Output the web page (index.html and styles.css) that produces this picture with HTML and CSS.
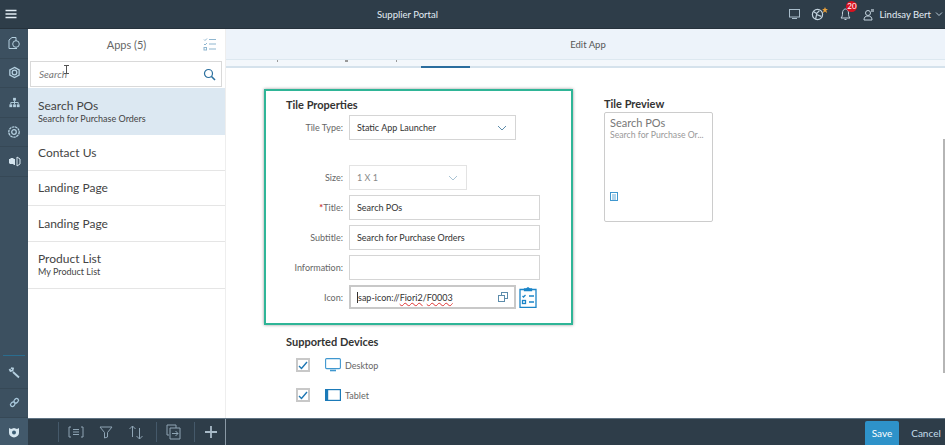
FILE: index.html
```html
<!DOCTYPE html>
<html lang="en">
<head>
  <meta charset="UTF-8">
  <meta name="viewport" content="width=device-width, initial-scale=1.0">
  <title>Supplier Portal</title>
  <link rel="stylesheet" href="styles.css">
</head>
<body>
  <header class="topbar">
    <svg class="menu-icon" width="14" height="12" viewBox="0 0 14 12"><path d="M1.500 2.500h11M1.500 6h11M1.500 9.500h11" stroke="#e4eef5" stroke-width="1.500"/></svg>
    <span class="topbar-title">Supplier Portal</span>
    <div class="topbar-right">
      <svg width="13" height="12" viewBox="0 0 13 12" fill="none" stroke="#a9bdcb"><rect x="1.500" y="1.500" width="10" height="7.500"/><path d="M4 10.500h5" /></svg>
      <span class="globe">
        <svg width="13" height="13" viewBox="0 0 14 14" fill="none" stroke="#c3d3de" stroke-width="1.300"><circle cx="7" cy="7" r="5.500"/><path d="M3 4l3 2 3-3M5 12l1-5 5 2" /></svg>
        <svg class="globe-star" width="6" height="6" viewBox="0 0 6 6"><path d="M3 0l.9 2H6L4.300 3.300 5 6 3 4.500 1 6l.7-2.700L0 2h2.100z" fill="#eba13b"/></svg>
      </span>
      <span class="bell">
        <svg width="11" height="14" viewBox="0 0 11 14" fill="none" stroke="#c3d3de"><path d="M1 11h9C8.500 9.500 8.500 8 8.500 6S7.500 2 5.500 2 2.500 4 2.500 6s0 3.500-1.500 5zM4.500 12.500h2"/></svg>
        <span class="badge">20</span>
      </span>
      <span class="user">
        <svg width="12" height="13" viewBox="0 0 12 13" fill="none" stroke="#c3d3de"><circle cx="5" cy="5" r="2.500"/><path d="M1 12c0-3 1.500-4 4-4s4 1 4 4z"/><rect x="8" y="1" width="3" height="3" fill="#8c9aa5" stroke="none"/></svg>
        <span class="user-name">Lindsay Bert</span>
        <svg width="8" height="6" viewBox="0 0 8 6" fill="none" stroke="#b7c9d6"><path d="M1 1.500l3 3 3-3"/></svg>
      </span>
    </div>
  </header>

  <div class="workspace">
    <nav class="rail">
      <a class="rail-btn"><svg width="14" height="14" viewBox="0 0 14 14" fill="none" stroke="#b5d0e0"><path d="M5 1.500L2 4v8.500h8M5 1.500h4V5"/><circle cx="9" cy="8" r="3.300"/></svg></a>
      <a class="rail-btn"><svg width="13" height="13" viewBox="0 0 14 14" fill="none" stroke="#b5d0e0" stroke-width="1.400"><path d="M7 1.500l5 2.800v5.400l-5 2.800-5-2.800V4.300z"/><circle cx="7" cy="7" r="2.500"/></svg></a>
      <a class="rail-btn"><svg width="13" height="13" viewBox="0 0 14 14" fill="#b5d0e0"><rect x="5.500" y="2" width="3" height="3"/><rect x="1.500" y="9" width="3" height="3"/><rect x="5.500" y="9" width="3" height="3"/><rect x="9.500" y="9" width="3" height="3"/><path d="M3 9V7h8v2M7 5v4" fill="none" stroke="#b5d0e0"/></svg></a>
      <a class="rail-btn"><svg width="14" height="14" viewBox="0 0 14 14" fill="none" stroke="#b5d0e0" stroke-width="1.300"><circle cx="7" cy="7" r="5.200" stroke-dasharray="2.500 .6"/><circle cx="7" cy="7" r="2.300"/></svg></a>
      <a class="rail-btn"><svg width="13" height="13" viewBox="0 0 13 13" fill="#d4e4ee"><path d="M1 4h1l1-1h2l1 1h1v6H6L5 9H2L1 8z"/><path d="M9 2l3 2v5l-3 2z" fill="none" stroke="#d4e4ee"/></svg></a>
      <div class="rail-spacer"></div>
      <div class="rail-rule"></div>
      <a class="rail-btn"><svg width="12" height="12" viewBox="0 0 12 12" fill="none" stroke="#b5d0e0" stroke-width="1.800"><path d="M11 10.500L5 5M1.500 2l1 2 2-.5.500-2-2-.5"/></svg></a>
      <a class="rail-btn"><svg width="13" height="13" viewBox="0 0 12 12" fill="none" stroke="#a9c8dc" stroke-width="1.200"><rect x="1.500" y="4.300" width="4.500" height="3.400" rx="1.700" transform="rotate(-45 6 6)"/><rect x="6" y="4.300" width="4.500" height="3.400" rx="1.700" transform="rotate(-45 6 6)"/></svg></a>
      <a class="rail-btn rail-btn-last"><svg width="12" height="12" viewBox="0 0 12 12"><path d="M1 2l2 1 3-1 3 1 2-1v5c0 2.500-2.500 4-5 4.500C3.500 11 1 9.500 1 7z" fill="#d6e6ef"/><circle cx="6" cy="6.500" r="2" fill="#3b5d74"/></svg></a>
    </nav>

    <div class="stage">
      <div class="panes">
        <aside class="apps">
          <div class="apps-head">
            <span class="apps-title">Apps (5)</span>
            <svg class="apps-select" width="14" height="14" viewBox="0 0 14 14" fill="none" stroke="#8fb6cf"><path d="M1 2.500l1 1 2-2M1 7l1 1 2-2M6 2.500h7M6 7h7M6 12h7"/><rect x="1" y="10.500" width="2.500" height="2.500"/></svg>
          </div>
          <div class="apps-search">
            <span class="apps-placeholder">Search</span>
            <svg class="text-cursor" width="5" height="9" viewBox="0 0 5 9" fill="none" stroke="#555"><path d="M0 .5h5M0 8.500h5M2.500 .5v8"/></svg>
            <svg width="13" height="13" viewBox="0 0 13 13" fill="none" stroke="#2a6f9e" stroke-width="1.200"><circle cx="5.500" cy="5.500" r="4"/><path d="M8.500 8.500L12 12" stroke-width="1.600"/></svg>
          </div>
          <ul class="app-list">
            <li class="app-item app-item-two selected"><span class="app-name">Search POs</span><span class="app-sub">Search for Purchase Orders</span></li>
            <li class="app-item"><span class="app-name">Contact Us</span></li>
            <li class="app-item"><span class="app-name">Landing Page</span></li>
            <li class="app-item"><span class="app-name">Landing Page</span></li>
            <li class="app-item app-item-two"><span class="app-name">Product List</span><span class="app-sub">My Product List</span></li>
          </ul>
        </aside>

        <main class="editor">
          <div class="editor-head">Edit App</div>
          <div class="tabstrip">
            <span class="tab-mark tab-mark-a"></span>
            <span class="tab-mark tab-mark-b"></span>
            <span class="tab-mark tab-mark-c"></span>
            <span class="tab-active"></span>
          </div>
          <div class="editor-body">
            <div class="form-col">
              <section class="tile-box">
                <h3 class="section-title">Tile Properties</h3>
                <div class="form-row">
                  <label>Tile Type:</label>
                  <div class="field field-type">Static App Launcher
                    <svg width="10" height="6" viewBox="0 0 10 6" fill="none" stroke="#5c8cab"><path d="M1 1l4 4 4-4"/></svg>
                  </div>
                </div>
                <div class="form-row form-row-size">
                  <label>Size:</label>
                  <div class="field field-size">1 X 1
                    <svg width="10" height="6" viewBox="0 0 10 6" fill="none" stroke="#a9c3d4"><path d="M1 1l4 4 4-4"/></svg>
                  </div>
                </div>
                <div class="form-row">
                  <label><span class="req">*</span>Title:</label>
                  <div class="field field-wide">Search POs</div>
                </div>
                <div class="form-row">
                  <label>Subtitle:</label>
                  <div class="field field-wide">Search for Purchase Orders</div>
                </div>
                <div class="form-row">
                  <label>Information:</label>
                  <div class="field field-wide"></div>
                </div>
                <div class="form-row">
                  <label>Icon:</label>
                  <div class="field field-icon">
                    <span class="icon-value">sap-icon://<u>Fiori2</u>/<u>F0003</u></span>
                    <svg width="10" height="10" viewBox="0 0 10 10" fill="none" stroke="#5c8cab"><rect x="3.500" y=".5" width="6" height="6"/><rect x=".5" y="3.500" width="6" height="6" fill="#fff"/></svg>
                  </div>
                  <svg class="icon-preview" width="18" height="21" viewBox="0 0 18 21" fill="none" stroke="#1b85c8" stroke-width="1.300"><path d="M5.500 2.500H1v18h16v-18h-4.500"/><path d="M5.500 3.500V1.800h2l1.500-1 1.500 1h2v1.700z" fill="#1b85c8"/><path d="M3.500 9l1 1 2-2M10 9h5M10 15h5"/><rect x="3.500" y="13.500" width="3" height="3"/></svg>
                </div>
              </section>

              <section class="devices">
                <h3 class="section-title">Supported Devices</h3>
                <div class="device-row">
                  <span class="checkbox"><svg width="10" height="9" viewBox="0 0 10 9" fill="none" stroke="#1d76b3" stroke-width="1.400"><path d="M1 5l2.500 2.500L9 1"/></svg></span>
                  <svg class="device-icon" width="16" height="14" viewBox="0 0 16 14" fill="none" stroke="#3f97cf" stroke-width="1.100"><rect x=".6" y=".6" width="14.800" height="10" rx="1"/><path d="M5 12.500h6" stroke-width="1.600"/></svg>
                  <span class="device-name">Desktop</span>
                </div>
                <div class="device-row">
                  <span class="checkbox"><svg width="10" height="9" viewBox="0 0 10 9" fill="none" stroke="#1d76b3" stroke-width="1.400"><path d="M1 5l2.500 2.500L9 1"/></svg></span>
                  <svg class="device-icon" width="16" height="12" viewBox="0 0 16 12" fill="none" stroke="#1b7ab8" stroke-width="1.200"><rect x=".6" y=".6" width="14.800" height="10.800"/><path d="M2 .6v10.800" stroke-width="2.400"/></svg>
                  <span class="device-name">Tablet</span>
                </div>
              </section>
            </div>

            <section class="preview">
              <h3 class="section-title">Tile Preview</h3>
              <div class="tile">
                <span class="tile-name">Search POs</span>
                <span class="tile-sub">Search for Purchase Or...</span>
                <svg class="tile-icon" width="8" height="9" viewBox="0 0 8 9" fill="none" stroke="#3f97cf"><rect x=".5" y=".5" width="7" height="8"/><path d="M2 3h4M2 5h4M2 7h4" stroke-width=".8"/></svg>
              </div>
            </section>
          </div>
          <div class="scrollbar"></div>
        </main>
      </div>

      <footer class="footer">
        <div class="footer-tools">
          <span class="tool-sep"></span>
          <svg width="16" height="12" viewBox="0 0 16 12" fill="none" stroke="#8fa5b5"><path d="M3 1H1v10h2M13 1h2v10h-2M5 3.500h6M5 6h6M5 8.500h6"/></svg>
          <svg class="tool-wide" width="14" height="14" viewBox="0 0 14 14" fill="none" stroke="#8fa5b5"><path d="M1 2h12L8.500 7.500V12l-3 1V7.500z"/></svg>
          <svg class="tool-wide" width="16" height="16" viewBox="0 0 16 16" fill="none" stroke="#8fa5b5"><path d="M4.500 13V2M1.500 5l3-3 3 3M11.500 4v11M8.500 12l3 3 3-3"/></svg>
          <span class="tool-sep tool-sep-far"></span>
          <svg width="16" height="16" viewBox="0 0 16 16" fill="none" stroke="#8fa5b5"><path d="M3 11H1V1h9v3M4 4h10v11H4zM6 9.500h6M9.500 7l2.500 2.500L9.500 12"/></svg>
          <span class="tool-sep tool-sep-far"></span>
          <svg width="14" height="14" viewBox="0 0 14 14" fill="none" stroke="#a8bac7" stroke-width="1.800"><path d="M7 1v12M1 7h12"/></svg>
        </div>
        <div class="footer-actions">
          <button class="btn-save">Save</button>
          <button class="btn-cancel">Cancel</button>
        </div>
      </footer>
    </div>
  </div>
</body>
</html>
```

FILE: styles.css
```css
* {
  box-sizing: border-box;
}
body {
  margin: 0;
  width: 945px;
  height: 445px;
  overflow: hidden;
  font-family: Lato, Arial, sans-serif;
  color: #333;
  background: #fff;
  display: flex;
  flex-direction: column;
}
svg {
  flex: none;
  display: block;
}
.section-title {
  margin: 0;
  font-size: 11px;
  line-height: 14px;
  font-weight: 700;
  color: #333;
}

/* top bar */
.topbar {
  height: 29px;
  flex: none;
  background: #2e3d49;
  color: #e4eef5;
  display: flex;
  align-items: center;
  padding-left: 4px;
  border-bottom: 1px solid #26323c;
}
.topbar-title {
  font-size: 9.500px;
  margin-left: 359px;
}
.topbar-right {
  margin-left: auto;
  display: flex;
  align-items: center;
  padding-right: 2px;
}
.globe, .bell {
  position: relative;
  display: block;
}
.globe {
  margin-left: 10px;
}
.globe-star {
  position: absolute;
  top: -1px;
  right: -4px;
}
.bell {
  margin-left: 16px;
}
.badge {
  position: absolute;
  top: -6px;
  left: 6px;
  width: 11px;
  height: 11px;
  border-radius: 50%;
  background: #d9121f;
  color: #fff;
  font-size: 8px;
  line-height: 11px;
  text-align: center;
}
.user {
  display: flex;
  align-items: center;
  margin-left: 12px;
}
.user-name {
  font-size: 9.500px;
  margin: 0 4px 0 4px;
}

/* layout */
.workspace {
  flex: 1;
  display: flex;
  min-height: 0;
}
.rail {
  width: 28px;
  flex: none;
  background: #3c5060;
  display: flex;
  flex-direction: column;
}
.rail-btn {
  height: 29.5px;
  flex: none;
  display: flex;
  align-items: center;
  justify-content: center;
  border-bottom: 1px solid #364856;
}
.rail-btn-last {
  border-bottom: none;
  background: #42596b;
  height: 27px;
}
.rail-spacer {
  flex: 1;
}
.rail-rule {
  height: 1px;
  margin: 0 3px 3px;
  background: #2a6d8f;
}
.stage {
  flex: 1;
  min-width: 0;
  display: flex;
  flex-direction: column;
}
.panes {
  flex: 1;
  min-height: 0;
  display: flex;
}

/* app list */
.apps {
  width: 198px;
  flex: none;
  border-right: 1px solid #eee;
  display: flex;
  flex-direction: column;
}
.apps-head {
  height: 31px;
  flex: none;
  position: relative;
  display: flex;
  align-items: center;
  justify-content: center;
  font-size: 11px;
  color: #666;
}
.apps-select {
  position: absolute;
  right: 8px;
  top: 8px;
}
.apps-search {
  height: 26px;
  margin: 1px 3px 1px 2px;
  border: 1px solid #d9d9d9;
  display: flex;
  align-items: center;
  justify-content: space-between;
  padding: 0 5px 0 8px;
  position: relative;
  flex: none;
}
.apps-placeholder {
  font-size: 10px;
  font-style: italic;
  color: #777;
}
.text-cursor {
  position: absolute;
  left: 33px;
  top: 3px;
}
.app-list {
  list-style: none;
  margin: 0;
  padding: 0;
}
.app-item {
  height: 35.500px;
  padding: 0 10px;
  border-bottom: 1px solid #e5e5e5;
  display: flex;
  flex-direction: column;
  justify-content: center;
}
.app-item-two {
  height: 47px;
}
.selected {
  background: #dce8f2;
  border-bottom: none;
}
.app-name {
  font-size: 12px;
  line-height: 15px;
  color: #444;
}
.app-sub {
  font-size: 9px;
  line-height: 12px;
  color: #444;
}

/* editor */
.editor {
  flex: 1;
  min-width: 0;
  position: relative;
  overflow: hidden;
}
.editor-head {
  height: 30px;
  background: #edf3fa;
  display: flex;
  align-items: center;
  justify-content: center;
  font-size: 9.500px;
  color: #555;
  padding-left: 5px;
}
.tabstrip {
  height: 9px;
  background: #f3f7fb;
  border-top: 1px solid #dde8f0;
  border-bottom: 2px solid #d5e2ec;
  position: relative;
}
.tab-mark {
  position: absolute;
  top: 0;
  width: 1px;
  height: 2px;
  background: #999;
}
.tab-mark-a { left: 51px; }
.tab-mark-b { left: 119px; width: 3px; }
.tab-mark-c { left: 170px; }
.tab-active {
  position: absolute;
  left: 195px;
  bottom: -2px;
  width: 49px;
  height: 2px;
  background: #2a6d9e;
}
.editor-body {
  display: flex;
  padding: 21px 0 0 38px;
}
.form-col {
  width: 309px;
  flex: none;
}
.tile-box {
  border: 2px solid #2fb597;
  box-shadow: 0 0 3px #999;
  padding: 7px 0 14px 20px;
  height: 236px;
}
.form-row {
  display: flex;
  align-items: center;
  margin-top: 5px;
}
.tile-box .section-title + .form-row {
  margin-top: 3px;
}
.form-row-size {
  margin-top: 25px;
}
.form-row label {
  width: 57px;
  margin-right: 6px;
  flex: none;
  text-align: right;
  font-size: 9px;
  color: #666;
}
.req {
  color: #c9302c;
  font-weight: 700;
}
.field {
  height: 25px;
  border: 1px solid #d5d5d5;
  background: #fff;
  font-size: 9px;
  color: #333;
  display: flex;
  align-items: center;
  justify-content: space-between;
  padding: 0 7px;
}
.field-type {
  width: 167px;
  padding-right: 8px;
}
.field-size {
  width: 118px;
  color: #888;
  border-color: #e3e3e3;
  padding-right: 8px;
}
.field-wide {
  width: 191px;
}
.field-icon {
  width: 167px;
  height: 24px;
  border: 2px solid #c8c8c8;
  padding: 0 6px 0 6px;
}
.icon-value {
  border-left: 1px solid #333;
}
.icon-value u {
  text-decoration: underline wavy #d33;
  text-decoration-thickness: 1px;
}
.icon-preview {
  margin-left: 3px;
}
.devices {
  padding: 10px 0 0 22px;
}
.device-row {
  display: flex;
  align-items: center;
  height: 30px;
  padding-left: 10px;
}
.devices .section-title {
  margin-bottom: 1px;
}
.checkbox {
  width: 14px;
  height: 14px;
  border: 2px solid #c8c8c8;
  display: flex;
  align-items: center;
  justify-content: center;
  flex: none;
}
.device-icon {
  margin: 0 4px 0 15px;
}
.device-name {
  font-size: 9px;
  color: #666;
}

/* preview */
.preview {
  margin: 8px 0 0 31px;
}
.preview .section-title {
  margin-bottom: 1px;
}
.tile {
  width: 109px;
  height: 110px;
  border: 1px solid #ccc;
  border-radius: 2px;
  padding: 4px 5px;
  display: flex;
  flex-direction: column;
}
.tile-name {
  font-size: 11px;
  line-height: 12px;
  color: #777;
}
.tile-sub {
  font-size: 8.700px;
  line-height: 11px;
  color: #999;
  white-space: nowrap;
}
.tile-icon {
  margin: 52px 0 0 0;
}
.scrollbar {
  position: absolute;
  right: 0;
  top: 110px;
  width: 2px;
  height: 234px;
  background: #b5b5b5;
}

/* footer */
.footer {
  height: 27px;
  flex: none;
  background: #2e3d49;
  border-top: 1px solid #5f7383;
  display: flex;
  justify-content: space-between;
}
.footer-tools {
  width: 198px;
  border-right: 1px solid #8a99a5;
  display: flex;
  align-items: center;
  gap: 9px;
  padding-left: 30px;
}
.tool-wide {
  margin-left: 6px;
}
.tool-sep {
  width: 1px;
  height: 20px;
  background: #45596a;
}
.tool-sep-far {
  margin-left: 3px;
}
.footer-actions {
  display: flex;
  align-items: flex-end;
}
.btn-save, .btn-cancel {
  font-family: inherit;
  font-size: 10px;
  border: none;
  height: 24px;
  padding: 0;
}
.btn-save {
  width: 34px;
  background: #2e92c9;
  color: #fff;
  border-radius: 2px 2px 0 0;
}
.btn-cancel {
  width: 46px;
  padding-left: 8px;
  background: none;
  color: #c4dcea;
}
```
